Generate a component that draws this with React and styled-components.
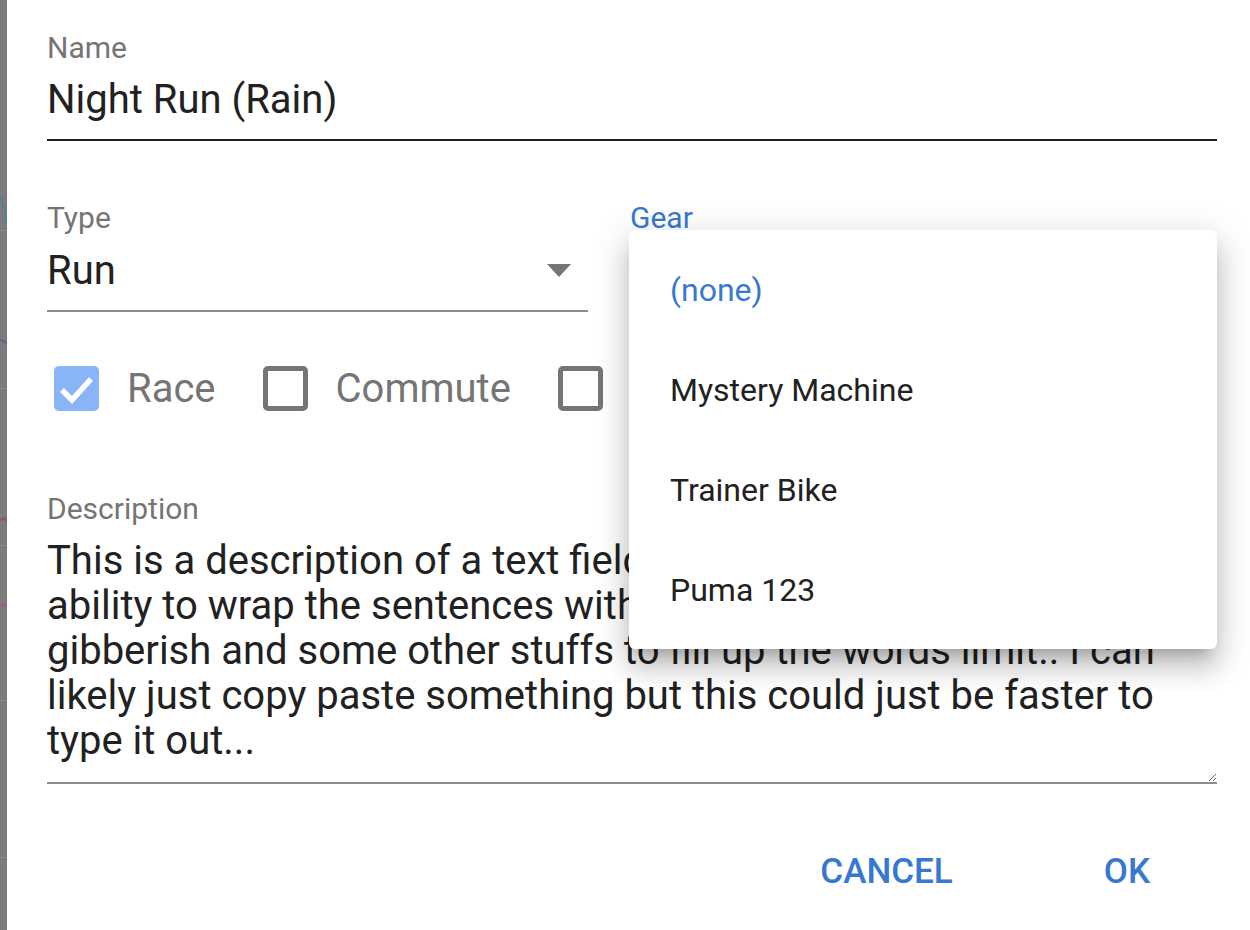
import React from "react";
import styled, { createGlobalStyle } from "styled-components";

const blue = "#3778d0";

const GlobalStyle = createGlobalStyle`
  html, body {
    margin: 0;
    padding: 0;
    background: #fff;
    font-family: Roboto, "Liberation Sans", Arial, sans-serif;
  }
  * { box-sizing: border-box; }
`;

const Page = styled.div`
  display: flex;
  width: 1250px;
  height: 930px;
  overflow: hidden;
`;

const Backdrop = styled.div`
  width: 7px;
  flex: none;
  background: #7b7b7b;
  svg { display: block; }
`;

const Dialog = styled.div`
  flex: 1;
  background: #fff;
  padding: 34px 33px 0 40px;
  display: flex;
  flex-direction: column;
`;

const Field = styled.div`
  position: relative;
  display: flex;
  flex-direction: column;
  flex: ${({ grow }) => (grow ? "1" : "none")};
  width: ${({ width }) => (width ? width + "px" : "auto")};
  margin-top: ${({ mt }) => mt || 0}px;
  margin-left: ${({ ml }) => ml || 0}px;
`;

const Label = styled.div`
  font-size: 30px;
  line-height: 28px;
  color: ${({ focused }) => (focused ? blue : "#757575")};
`;

const Value = styled.div`
  display: flex;
  align-items: center;
  justify-content: space-between;
  margin-top: ${({ mt }) => mt}px;
  height: 40px;
  font-size: 40px;
  color: #212121;
`;

const Underline = styled.div`
  margin-top: 20px;
  height: 2px;
  background: ${({ dark, focused }) => (focused ? blue : dark ? "#1f1f1f" : "#8c8c8c")};
`;

const Arrow = styled.span`
  width: 0;
  height: 0;
  margin-right: 17px;
  border-left: 12px solid transparent;
  border-right: 12px solid transparent;
  border-top: 13px solid #757575;
`;

const Row = styled.div`
  display: flex;
  margin-top: ${({ mt }) => mt}px;
`;

const Menu = styled.ul`
  position: absolute;
  z-index: 10;
  left: -1px;
  top: 26px;
  width: 588px;
  height: 419px;
  margin: 0;
  padding: 10px 0 0;
  list-style: none;
  background: #fff;
  border-radius: 6px;
  box-shadow: 0 12px 12px -8px rgba(0, 0, 0, 0.2),
    0 20px 25px 2px rgba(0, 0, 0, 0.14), 0 8px 35px 5px rgba(0, 0, 0, 0.12);
`;

const MenuItem = styled.li`
  height: 100px;
  display: flex;
  align-items: center;
  padding-left: 41px;
  font-size: 32px;
  color: ${({ selected }) => (selected ? blue : "#212121")};
`;

const Checks = styled.div`
  display: flex;
  align-items: center;
  height: 45px;
  margin-top: 54px;
  padding-left: 7px;
`;

const CheckItem = styled.label`
  display: flex;
  align-items: center;
  gap: 28px;
  margin-right: 47px;
  font-size: 40px;
  color: #757575;
`;

const Box = styled.span`
  width: 45px;
  height: 45px;
  flex: none;
  border-radius: 5px;
  background: ${({ checked }) => (checked ? "#8ab4f8" : "transparent")};
  border: ${({ checked }) => (checked ? "none" : "5px solid #757575")};
  svg { display: block; }
`;

const TextArea = styled.textarea`
  display: block;
  margin-top: 13px;
  width: 100%;
  height: 248px;
  padding: 2px 0 20px;
  border: none;
  border-bottom: 2px solid #8c8c8c;
  outline: none;
  resize: vertical;
  overflow: hidden;
  font-family: Roboto, "Liberation Sans", Arial, sans-serif;
  font-size: 40px;
  line-height: 45px;
  color: #212121;
  background: transparent;
`;

const Actions = styled.div`
  display: flex;
  justify-content: flex-end;
  gap: 151px;
  margin-top: 68px;
  padding-right: 67px;
`;

const Button = styled.button`
  border: none;
  background: none;
  padding: 0;
  font-family: Roboto, "Liberation Sans", Arial, sans-serif;
  font-weight: 500;
  font-size: 35px;
  line-height: 40px;
  text-transform: uppercase;
  color: ${blue};
`;

const Checkbox = ({ checked, label }) => (
  <CheckItem>
    <Box checked={checked}>
      {checked && (
        <svg width="45" height="45" viewBox="0 0 45 45">
          <path d="M8 24 L18 34 L37 13" fill="none" stroke="#fff" strokeWidth="5.5" />
        </svg>
      )}
    </Box>
    {label}
  </CheckItem>
);

const description =
  "This is a description of a text field to test the\n" +
  "ability to wrap the sentences with some more\n" +
  "gibberish and some other stuffs to fill up the words limit.. I can\n" +
  "likely just copy paste something but this could just be faster to\n" +
  "type it out...";

const gear = ["(none)", "Mystery Machine", "Trainer Bike", "Puma 123"];

export default function App() {
  return (
    <Page>
      <GlobalStyle />
      <Backdrop>
        <svg width="7" height="930" viewBox="0 0 7 930">
          {[230, 388, 545, 700, 857].map((y) => (
            <rect key={y} x="0" y={y} width="7" height="1" fill="#8a8a8a" />
          ))}
          <path d="M0 196 Q4 204 7 222" stroke="#4f8196" strokeWidth="2" fill="none" />
          <path d="M0 340 L7 343" stroke="#6a5c93" strokeWidth="2" fill="none" />
          <path d="M0 520 L5 518 L7 522" stroke="#93506a" strokeWidth="2" fill="none" />
          <path d="M0 606 L7 605" stroke="#8e5c8f" strokeWidth="2" fill="none" />
        </svg>
      </Backdrop>
      <Dialog>
        <Field>
          <Label>Name</Label>
          <Value mt={17}>Night Run (Rain)</Value>
          <Underline dark />
        </Field>

        <Row mt={63}>
          <Field width={541}>
            <Label>Type</Label>
            <Value mt={18}>
              Run
              <Arrow />
            </Value>
            <Underline />
          </Field>
          <Field grow ml={42}>
            <Label focused>Gear</Label>
            <Value mt={18} />
            <Underline focused />
            <Menu>
              {gear.map((g, i) => (
                <MenuItem key={g} selected={i === 0}>
                  {g}
                </MenuItem>
              ))}
            </Menu>
          </Field>
        </Row>

        <Checks>
          <Checkbox checked label="Race" />
          <Checkbox label="Commute" />
          <Checkbox label="Trainer" />
        </Checks>

        <Field mt={84}>
          <Label>Description</Label>
          <TextArea wrap="off" readOnly defaultValue={description} />
        </Field>

        <Actions>
          <Button>Cancel</Button>
          <Button>OK</Button>
        </Actions>
      </Dialog>
    </Page>
  );
}
